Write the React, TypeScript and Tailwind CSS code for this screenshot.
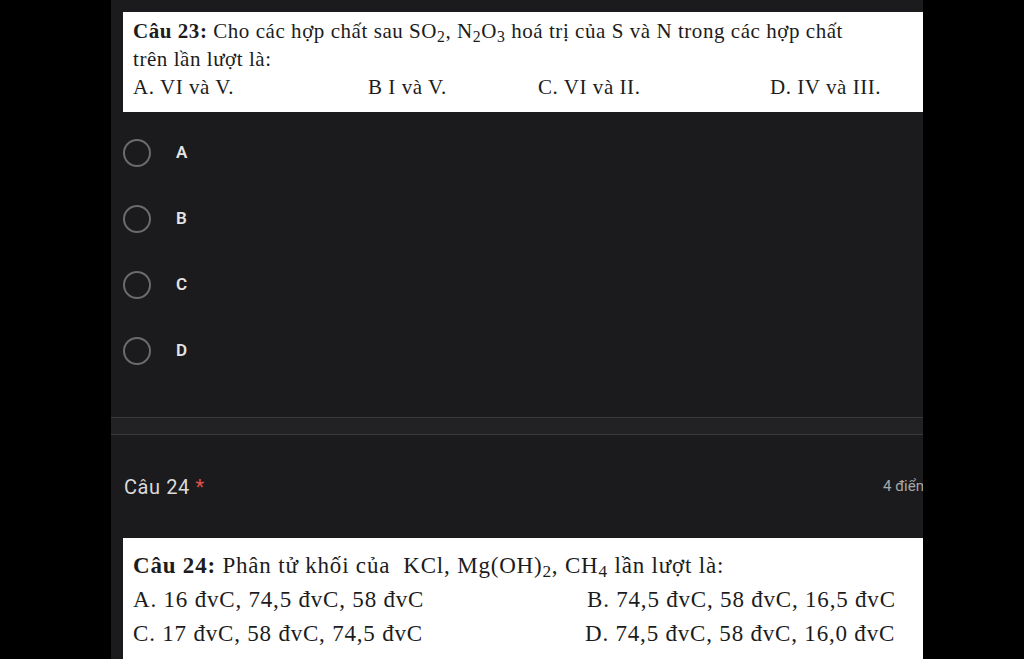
import React from "react";

const serif = { fontFamily: '"Liberation Serif", "Times New Roman", serif' };
const sans = { fontFamily: 'Roboto, "Noto Sans", Arial, sans-serif' };

function Radio({ label }: { label: string }) {
  return (
    <div className="flex h-[66px] items-center pl-[12px]">
      <div className="h-[28px] w-[28px] rounded-full border-2 border-[#6b6b6b]" />
      <span className="ml-[25px] text-[17px] font-semibold tracking-[1px] text-[#e4e4e4]" style={sans}>
        {label}
      </span>
    </div>
  );
}

export default function App() {
  return (
    <div className="flex h-[659px] w-[1024px] overflow-hidden bg-black">
      <div className="w-[111px] shrink-0" />
      <div className="flex h-[659px] w-[812px] shrink-0 flex-col overflow-hidden bg-[#1b1b1d]">
        <div className="h-[12px] shrink-0" />
        <div
          className="ml-[12px] h-[100px] shrink-0 bg-white pl-[10px] pt-[5px] text-[21px] leading-[28px] tracking-[0.55px] text-[#1c1c1c]"
          style={serif}
        >
          <div className="whitespace-nowrap">
            <b>Câu 23:</b> Cho các hợp chất sau SO<sub>2</sub>, N<sub>2</sub>O<sub>3</sub> hoá trị của S và N trong các hợp chất
          </div>
          <div className="whitespace-nowrap">trên lần lượt là:</div>
          <div className="flex whitespace-nowrap">
            <span className="w-[235px]">A. VI và V.</span>
            <span className="w-[170px]">B I và V.</span>
            <span className="w-[232px]">C. VI và II.</span>
            <span>D. IV và III.</span>
          </div>
        </div>
        <div className="h-[8px] shrink-0" />
        <Radio label="A" />
        <Radio label="B" />
        <Radio label="C" />
        <Radio label="D" />
        <div className="h-[33px] shrink-0" />
        <div className="h-[18px] shrink-0 border-y border-[#3a3a3c] bg-[#222224]" />
        <div className="flex h-[103px] shrink-0 items-center">
          <div className="w-[772px] shrink-0 pl-[13px] text-[20px] tracking-[0.6px] text-[#dadada]" style={sans}>
            Câu 24 <span className="text-[#e0524a]">*</span>
          </div>
          <span className="whitespace-nowrap text-[15px] text-[#a8a8a8]" style={sans}>
            4 điểm
          </span>
        </div>
        <div
          className="ml-[12px] flex-1 bg-white pl-[10px] pt-[11px] text-[23px] leading-[34px] tracking-[0.8px] text-[#1c1c1c]"
          style={serif}
        >
          <div className="whitespace-nowrap">
            <b>Câu 24:</b> Phân tử khối của&nbsp; KCl, Mg(OH)<sub>2</sub>, CH<sub>4</sub> lần lượt là:
          </div>
          <div className="flex whitespace-nowrap">
            <span className="w-[454px]">A. 16 đvC, 74,5 đvC, 58 đvC</span>
            <span>B. 74,5 đvC, 58 đvC, 16,5 đvC</span>
          </div>
          <div className="flex whitespace-nowrap">
            <span className="w-[452px]">C. 17 đvC, 58 đvC, 74,5 đvC</span>
            <span>D. 74,5 đvC, 58 đvC, 16,0 đvC</span>
          </div>
        </div>
      </div>
    </div>
  );
}
